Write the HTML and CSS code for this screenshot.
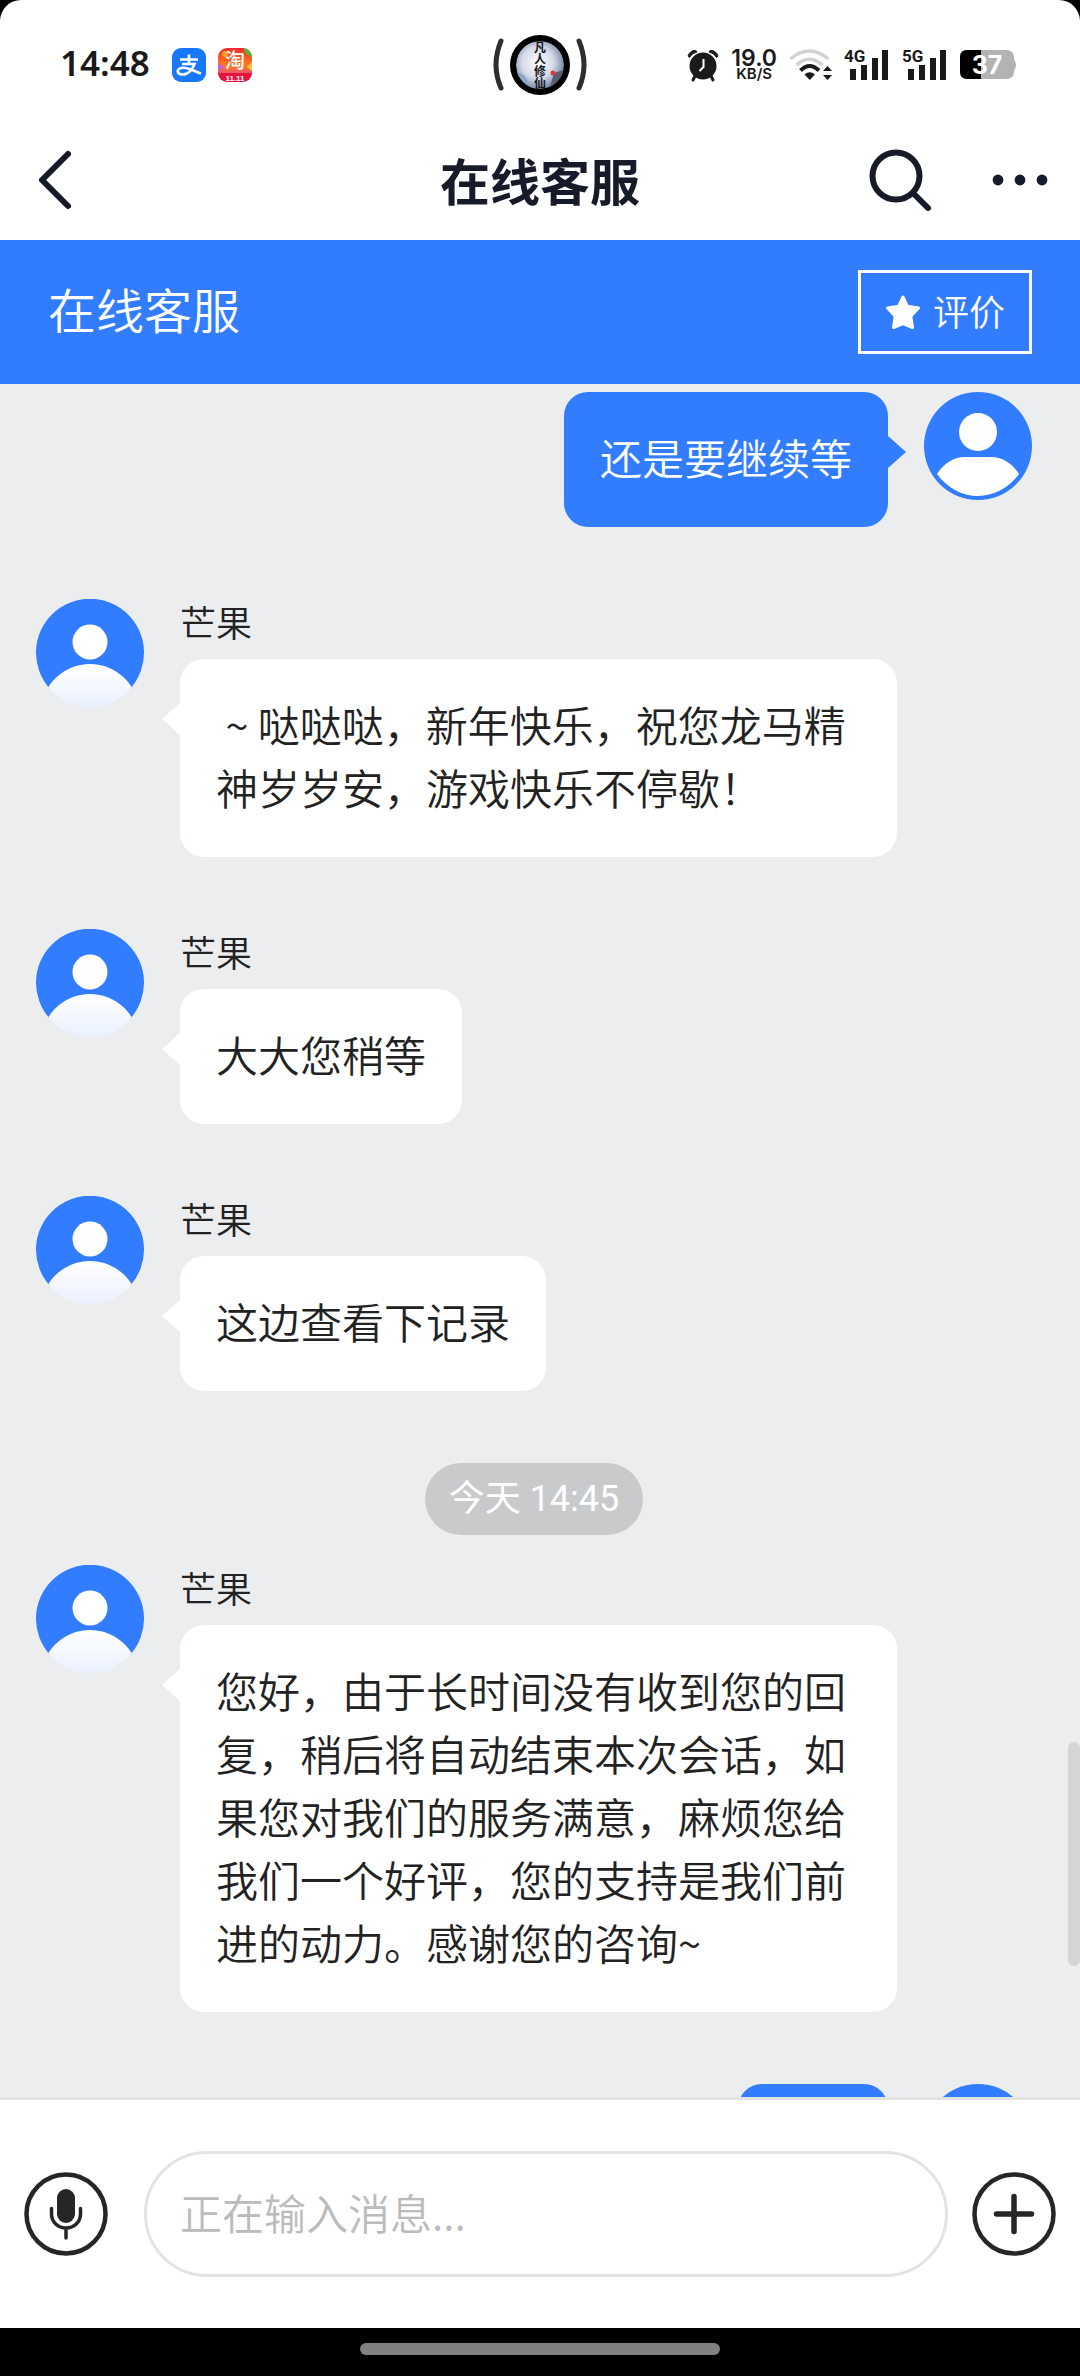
FILE: index.html
```html
<!DOCTYPE html>
<html lang="zh-CN">
<head>
    <meta charset="UTF-8">
    <meta name="viewport" content="width=device-width, initial-scale=1.0">
    <title>在线客服</title>
    <link rel="stylesheet" href="styles.css">
</head>
<body>
    <!-- shared avatar shapes -->
    <svg class="defs" width="0" height="0" aria-hidden="true">
        <defs>
            <linearGradient id="shirt" x1="0" y1="0" x2="0" y2="1">
                <stop offset="0" stop-color="#ffffff"/>
                <stop offset="0.45" stop-color="#e9f0ff"/>
            </linearGradient>
            <clipPath id="round"><circle cx="54" cy="54" r="54"/></clipPath>
            <symbol id="agent" viewBox="0 0 108 108">
                <path d="M14 90A54 54 0 1 1 94 90Z" fill="#327dff"/>
                <circle cx="54" cy="43" r="17.5" fill="#fff"/>
                <g clip-path="url(#round)"><circle cx="54" cy="114" r="49" fill="url(#shirt)"/></g>
            </symbol>
            <symbol id="user" viewBox="0 0 108 108">
                <circle cx="54" cy="54" r="54" fill="#327dff"/>
                <circle cx="54" cy="40" r="19" fill="#fff"/>
                <path d="M13 82C20 71 30 65 41 65H67C78 65 88 71 95 82C85 96 70 104 54 104C38 104 23 96 13 82Z" fill="#fff"/>
            </symbol>
        </defs>
    </svg>

    <div class="top">
        <div class="status">
            <div class="status-left">
                <span class="clock">14:48</span>
                <svg width="34" height="34" viewBox="0 0 34 34">
                    <rect width="34" height="34" rx="9" fill="#1677ff"/>
                    <path d="M8 11.500H26M17 6.500V16M10 16H22.500C21 20 17 26.500 10.500 26.500C6 26.500 4.500 23 7 21C12 17.500 20 22.500 29 25.500" fill="none" stroke="#fff" stroke-width="2.600"/>
                </svg>
                <svg width="34" height="34" viewBox="0 0 34 34">
                    <defs>
                        <linearGradient id="tao" x1="0" y1="0" x2="0" y2="1">
                            <stop offset="0" stop-color="#f4282f"/>
                            <stop offset="0.5" stop-color="#ff7a1c"/>
                            <stop offset="0.74" stop-color="#e85a6a"/>
                            <stop offset="0.75" stop-color="#e9113f"/>
                        </linearGradient>
                        <clipPath id="taoClip"><rect width="34" height="34" rx="9"/></clipPath>
                    </defs>
                    <g clip-path="url(#taoClip)">
                        <rect width="34" height="34" fill="url(#tao)"/>
                        <path d="M25 0H34V9L28 6Z" fill="#54b83a"/>
                        <circle cx="7" cy="6" r="3" fill="#ffa52b"/>
                        <path d="M0 15L6 19L0 23Z" fill="#c661d8"/>
                        <path d="M34 14L29 19L34 23Z" fill="#ffc43a"/>
                    </g>
                    <text x="17" y="20" class="tao-text">淘</text>
                    <text x="17" y="33" class="tao-date">11.11</text>
                </svg>
            </div>

            <svg class="island" width="96" height="60" viewBox="0 0 96 60">
                <defs>
                    <radialGradient id="sky" cx="0.45" cy="0.45" r="0.6">
                        <stop offset="0" stop-color="#fbfcff"/>
                        <stop offset="0.55" stop-color="#d5dae8"/>
                        <stop offset="1" stop-color="#66789a"/>
                    </radialGradient>
                    <clipPath id="disc"><circle cx="48" cy="30" r="24"/></clipPath>
                </defs>
                <path d="M9 6Q-1 30 9 53M87 6Q97 30 87 53" fill="none" stroke="#2e2e2e" stroke-width="5" stroke-linecap="round"/>
                <circle cx="48" cy="30" r="30" fill="#000"/>
                <g clip-path="url(#disc)">
                    <circle cx="48" cy="30" r="24" fill="url(#sky)"/>
                    <path d="M24 36L32 40L38 50L48 56H28Z" fill="#8ba6c6"/>
                    <path d="M62 38L74 34V50L58 52Z" fill="#58616d"/>
                    <circle cx="61" cy="38" r="2.500" fill="#d63a32"/>
                    <text x="48" y="6" class="ink">凡人修仙</text>
                </g>
            </svg>

            <div class="status-right">
                <svg width="32" height="32" viewBox="0 0 32 32">
                    <circle cx="16" cy="17" r="13.500" fill="#1a1a1a"/>
                    <path d="M1 7Q3 1 9 1.500L10 3Q5 4 2.500 8.500ZM31 7Q29 1 23 1.500L22 3Q27 4 29.500 8.500Z" fill="#1a1a1a" stroke="#1a1a1a" stroke-width="1"/>
                    <path d="M8 27L6 31M24 27L26 31" stroke="#1a1a1a" stroke-width="3" stroke-linecap="round"/>
                    <path d="M16.500 10V18L12.500 22" fill="none" stroke="#fff" stroke-width="2"/>
                </svg>
                <span class="speed"><b>19.0</b><small>KB/S</small></span>
                <svg width="43" height="32" viewBox="0 0 43 32">
                    <path d="M1.500 10Q20 -6 39.500 10M7.500 16Q20 4.500 33.500 16" fill="none" stroke="#d2d2d2" stroke-width="3.500"/>
                    <path d="M11.500 21.500Q20.500 12.500 30 21.500" fill="none" stroke="#1a1a1a" stroke-width="4"/>
                    <path d="M15.500 25.500Q20.500 21 26 25.500L20.800 31Z" fill="#1a1a1a"/>
                    <path d="M34 22L38.500 17L43 22ZM34 26L38.500 31L43 26Z" fill="#1a1a1a"/>
                </svg>
                <svg width="46" height="32" viewBox="0 0 46 32">
                    <text x="0" y="13" class="net">4G</text>
                    <path d="M6 20H12V31H6ZM17 16H23V31H17ZM28 9H34V31H28ZM38 1H44V31H38Z" fill="#1a1a1a"/>
                </svg>
                <svg width="46" height="32" viewBox="0 0 46 32">
                    <text x="0" y="13" class="net">5G</text>
                    <path d="M6 20H12V31H6ZM17 16H23V31H17ZM28 9H34V31H28ZM38 1H44V31H38Z" fill="#1a1a1a"/>
                </svg>
                <svg width="56" height="30" viewBox="0 0 56 30">
                    <rect width="54" height="29" rx="7" fill="#b3b3b3"/>
                    <path d="M53 9Q56 11 56 15Q56 19 53 21Z" fill="#b3b3b3"/>
                    <path d="M21 0H7Q0 0 0 7V22Q0 29 7 29H21Z" fill="#000"/>
                    <text x="27" y="24" class="percent">37</text>
                </svg>
            </div>
        </div>

        <header class="nav">
            <button class="icon-btn" aria-label="返回">
                <svg width="42" height="60" viewBox="0 0 42 60">
                    <path d="M38 4L12 30L38 56" fill="none" stroke="#171a29" stroke-width="6" stroke-linecap="round" stroke-linejoin="round"/>
                </svg>
            </button>
            <h1>在线客服</h1>
            <div class="nav-actions">
                <button class="icon-btn" aria-label="搜索">
                    <svg width="66" height="66" viewBox="0 0 66 66">
                        <circle cx="29" cy="29" r="23.500" fill="none" stroke="#171a29" stroke-width="6"/>
                        <path d="M46 46L61 61" stroke="#171a29" stroke-width="6" stroke-linecap="round"/>
                    </svg>
                </button>
                <button class="icon-btn" aria-label="更多">
                    <svg width="60" height="60" viewBox="0 0 60 60" fill="#171a29">
                        <circle cx="8" cy="30" r="5.400"/>
                        <circle cx="30" cy="30" r="5.400"/>
                        <circle cx="52" cy="30" r="5.400"/>
                    </svg>
                </button>
            </div>
        </header>
    </div>

    <div class="banner">
        <h2>在线客服</h2>
        <button class="rate">
            <svg width="36" height="36" viewBox="0 0 36 36">
                <path d="M18 3L22.300 12.200L33.500 14L25.800 22.300L27.500 33.500L18 29.500L8.500 33.500L10.200 22.300L2.500 14L13.700 12.200Z" fill="#fff" stroke="#fff" stroke-width="3" stroke-linejoin="round"/>
            </svg>
            <span>评价</span>
        </button>
    </div>

    <main class="chat">
        <div class="message mine">
            <svg class="avatar"><use href="#user"/></svg>
            <p class="bubble">还是要继续等</p>
        </div>

        <div class="message">
            <svg class="avatar"><use href="#agent"/></svg>
            <div class="content">
                <div class="name">芒果</div>
                <p class="bubble"> ~ 哒哒哒，新年快乐，祝您龙马精神岁岁安，游戏快乐不停歇！</p>
            </div>
        </div>

        <div class="message">
            <svg class="avatar"><use href="#agent"/></svg>
            <div class="content">
                <div class="name">芒果</div>
                <p class="bubble">大大您稍等</p>
            </div>
        </div>

        <div class="message">
            <svg class="avatar"><use href="#agent"/></svg>
            <div class="content">
                <div class="name">芒果</div>
                <p class="bubble">这边查看下记录</p>
            </div>
        </div>

        <div class="time">今天 14:45</div>

        <div class="message">
            <svg class="avatar"><use href="#agent"/></svg>
            <div class="content">
                <div class="name">芒果</div>
                <p class="bubble">您好，由于长时间没有收到您的回复，稍后将自动结束本次会话，如果您对我们的服务满意，麻烦您给我们一个好评，您的支持是我们前进的动力。感谢您的咨询~</p>
            </div>
        </div>

        <div class="message mine">
            <svg class="avatar"><use href="#user"/></svg>
            <p class="bubble"></p>
        </div>

        <div class="scroll-thumb"></div>
    </main>

    <form class="composer">
        <button type="button" class="icon-btn" aria-label="语音">
            <svg width="84" height="84" viewBox="0 0 84 84" fill="none" stroke="#262626">
                <circle cx="42" cy="42" r="39.500" stroke-width="4.500"/>
                <rect x="33" y="17" width="18" height="34" rx="9" fill="#262626" stroke="none"/>
                <path d="M27.500 36.500V42C27.500 50 34 56 42 56C50 56 56.500 50 56.500 42V36.500M42 56V66" stroke-width="3.500" stroke-linecap="round"/>
            </svg>
        </button>
        <input type="text" class="field" placeholder="正在输入消息..." aria-label="正在输入消息...">
        <button type="button" class="icon-btn" aria-label="添加">
            <svg width="84" height="84" viewBox="0 0 84 84" fill="none" stroke="#262626">
                <circle cx="42" cy="42" r="39.500" stroke-width="4.500"/>
                <path d="M24.500 42H59.500M42 24.500V59.500" stroke-width="5.500" stroke-linecap="round"/>
            </svg>
        </button>
    </form>

    <div class="home-bar"><div class="handle"></div></div>
</body>
</html>
```

FILE: styles.css
```css
* {
    box-sizing: border-box;
}
body {
    font-family: "Noto Sans CJK SC", sans-serif;
    font-weight: 350;
    display: flex;
    flex-direction: column;
    height: 100vh;
    margin: 0;
    background: #000;
    color: #222;
}
h1, h2, p {
    margin: 0;
    font-weight: inherit;
}
button {
    font-family: inherit;
    font-weight: inherit;
    cursor: pointer;
}
svg {
    display: block;
    flex: none;
    overflow: visible;
}
.defs {
    position: absolute;
}
.icon-btn {
    padding: 0;
    border: none;
    background: none;
}

/* status bar + title bar */
.top {
    background: #fff;
    border-radius: 21px 21px 0 0;
}
.status {
    display: grid;
    grid-template-columns: 1fr auto 1fr;
    align-items: center;
    height: 120px;
    padding: 10px 60px 0;
    color: #1a1a1a;
}
.status-left {
    display: flex;
    align-items: center;
    gap: 12px;
}
.clock {
    font-family: "Noto Sans", sans-serif;
    font-size: 35px;
    font-weight: 600;
    line-height: 36px;
    margin-right: 10px;
    padding-bottom: 4px;
}
.tao-text {
    font-size: 20px;
    font-weight: 500;
    fill: #fff;
    text-anchor: middle;
}
.tao-date {
    font-family: "Liberation Sans", sans-serif;
    font-size: 8px;
    font-weight: bold;
    fill: #fff;
    text-anchor: middle;
}
.ink {
    font-size: 12px;
    font-weight: 700;
    fill: #15151c;
    writing-mode: vertical-rl;
}
.status-right {
    display: flex;
    align-items: center;
    justify-content: flex-end;
    gap: 12px;
    margin-right: 4px;
}
.speed {
    display: flex;
    flex-direction: column;
    align-items: center;
    font-family: Inter, sans-serif;
    font-weight: 600;
}
.speed b {
    font-size: 23px;
    font-weight: 600;
    line-height: 18px;
}
.speed small {
    font-size: 15px;
    line-height: 14px;
}
.net {
    font-family: Roboto, sans-serif;
    font-size: 17px;
    font-weight: 700;
    fill: #1a1a1a;
}
.percent {
    font-family: Inter, sans-serif;
    font-size: 25px;
    font-weight: 700;
    fill: #fff;
    text-anchor: middle;
}
.nav {
    display: grid;
    grid-template-columns: 1fr auto 1fr;
    align-items: center;
    justify-items: start;
    height: 120px;
    padding: 0 30px;
}
.nav h1 {
    font-size: 50px;
    font-weight: 700;
    line-height: 60px;
    padding-bottom: 2px;
    color: #171a29;
}
.nav-actions {
    display: flex;
    align-items: center;
    justify-self: end;
    gap: 57px;
}

/* blue banner */
.banner {
    display: flex;
    align-items: center;
    justify-content: space-between;
    height: 144px;
    padding: 0 48px;
    background: #327dff;
    color: #fff;
}
.banner h2 {
    font-size: 48px;
    line-height: 72px;
    padding-bottom: 8px;
}
.rate {
    display: flex;
    align-items: center;
    gap: 12px;
    height: 84px;
    padding: 0 24px;
    border: 3px solid #fff;
    background: transparent;
    color: #fff;
    font-size: 36px;
    line-height: 48px;
}
.rate span {
    padding-bottom: 4px;
}

/* conversation, with a 12px gutter for the scroll thumb */
.chat {
    position: relative;
    flex: 1;
    min-height: 0;
    overflow: hidden;
    padding: 8px 48px 0 36px;
    background: #ebedef;
}
.message {
    display: flex;
    align-items: flex-start;
    gap: 36px;
    margin-bottom: 72px;
}
.mine {
    flex-direction: row-reverse;
}
.avatar {
    width: 108px;
    height: 108px;
}
.content {
    display: flex;
    flex-direction: column;
    align-items: flex-start;
    padding-right: 135px;
}
.name {
    font-size: 36px;
    line-height: 44px;
    margin-bottom: 16px;
}
.bubble {
    position: relative;
    min-width: 150px;
    min-height: 135px;
    padding: 33px 36px 39px;
    border-radius: 24px;
    background: #fff;
    font-size: 42px;
    line-height: 63px;
    white-space: pre-wrap;
}
.bubble::before {
    content: "";
    position: absolute;
    top: 44px;
    left: -18px;
    border: 16px solid transparent;
    border-left: none;
    border-right: 18px solid #fff;
}
.mine .bubble {
    background: #327dff;
    color: #fff;
}
.mine .bubble::before {
    left: auto;
    right: -18px;
    border-right: none;
    border-left: 18px solid #327dff;
}
.time {
    width: fit-content;
    margin: 0 auto 30px;
    padding: 0 24px;
    border-radius: 36px;
    background: #c9cacc;
    color: #fff;
    font-family: Roboto, "Noto Sans CJK SC", sans-serif;
    font-size: 36px;
    font-weight: 400;
    line-height: 72px;
}
.scroll-thumb {
    position: absolute;
    top: 1358px;
    right: 0;
    width: 12px;
    height: 224px;
    border-radius: 6px;
    background: #d4d5d7;
}

/* message input */
.composer {
    display: flex;
    align-items: center;
    gap: 24px;
    padding: 51px 24px;
    border-top: 3px solid #e3e3e3;
    background: #fff;
}
.field {
    flex: 1;
    min-width: 0;
    height: 126px;
    margin-left: 12px;
    padding: 0 33px 6px;
    border: 3px solid #e3e3e3;
    border-radius: 63px;
    background: #fff;
    color: #222;
    font-family: inherit;
    font-size: 42px;
    font-weight: inherit;
}
.field::placeholder {
    color: #bbb;
}

.home-bar {
    display: flex;
    align-items: center;
    justify-content: center;
    height: 48px;
    padding-bottom: 6px;
}
.handle {
    width: calc(100% / 3);
    height: 12px;
    border-radius: 6px;
    background: #808080;
}
```
